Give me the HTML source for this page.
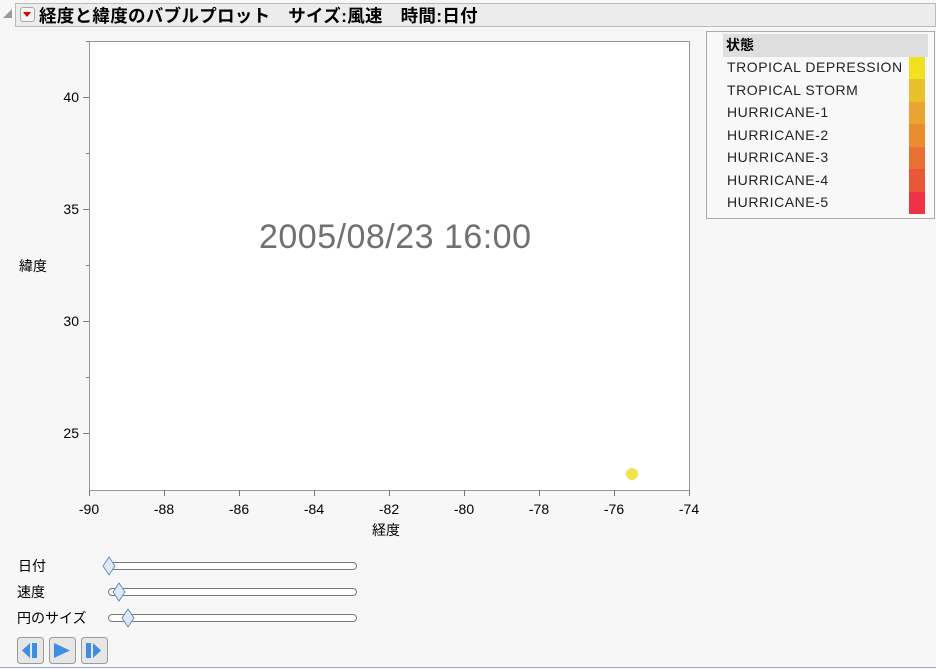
<!DOCTYPE html>
<html><head><meta charset="utf-8"><style>
body{margin:0;width:936px;height:669px;background:#f7f7f7;font-family:"Liberation Sans","Noto Sans CJK JP",sans-serif;position:relative;overflow:hidden}
.a{position:absolute}
.hdr{left:15px;top:3px;width:921px;height:24px;background:#ececec;border:1px solid #bbb;box-sizing:border-box}
.t{font-size:14px;color:#000}
.leg div.r{position:absolute;left:20px;font-size:14px;color:#222;letter-spacing:0.55px}
</style></head><body>
<div class="a" style="left:3px;top:9px;width:0;height:0;border-left:9px solid transparent;border-bottom:9px solid #999"></div>
<div class="a hdr"></div>
<div class="a" style="left:20px;top:7px;width:15px;height:15px;border:1px solid #aaa;border-radius:3px;background:#f4f4f4;box-sizing:border-box"></div>
<div class="a" style="left:23px;top:12px;width:0;height:0;border-left:4.5px solid transparent;border-right:4.5px solid transparent;border-top:5px solid #d00"></div>
<div class="a" style="left:39px;top:3px;font-size:17.5px;font-weight:bold;white-space:pre;letter-spacing:0.3px">経度と緯度のバブルプロット　サイズ:風速　時間:日付</div>

<svg class="a" style="left:0;top:0" width="936" height="669">
<rect x="89.5" y="41.5" width="600" height="449" fill="#fff" stroke="#999"/>
<g stroke="#777">
<line x1="83" y1="97.5" x2="89" y2="97.5"/><line x1="83" y1="209.5" x2="89" y2="209.5"/><line x1="83" y1="321.5" x2="89" y2="321.5"/><line x1="83" y1="433.5" x2="89" y2="433.5"/>
<line x1="86" y1="153.5" x2="89" y2="153.5"/><line x1="86" y1="265.5" x2="89" y2="265.5"/><line x1="86" y1="377.5" x2="89" y2="377.5"/>
<line x1="86" y1="41.5" x2="89" y2="41.5"/>
<line x1="89.5" y1="490" x2="89.5" y2="496"/><line x1="164.5" y1="490" x2="164.5" y2="496"/><line x1="239.5" y1="490" x2="239.5" y2="496"/><line x1="314.5" y1="490" x2="314.5" y2="496"/><line x1="389.5" y1="490" x2="389.5" y2="496"/><line x1="464.5" y1="490" x2="464.5" y2="496"/><line x1="539.5" y1="490" x2="539.5" y2="496"/><line x1="614.5" y1="490" x2="614.5" y2="496"/><line x1="689.5" y1="490" x2="689.5" y2="496"/>
</g>
<g font-family="Liberation Sans,sans-serif" font-size="14" fill="#000">
<text x="79" y="102" text-anchor="end">40</text><text x="79" y="214" text-anchor="end">35</text><text x="79" y="326" text-anchor="end">30</text><text x="79" y="438" text-anchor="end">25</text>
<g text-anchor="middle"><text x="89" y="514">-90</text><text x="164" y="514">-88</text><text x="239" y="514">-86</text><text x="314" y="514">-84</text><text x="389" y="514">-82</text><text x="464" y="514">-80</text><text x="539" y="514">-78</text><text x="614" y="514">-76</text><text x="689" y="514">-74</text></g>
</g>
<text x="395" y="248" text-anchor="middle" font-family="Liberation Sans,sans-serif" font-size="34" fill="#707070" textLength="272">2005/08/23 16:00</text>
<circle cx="632" cy="474" r="6" fill="#f0e448"/>
<g stroke="#777" fill="#fff"><rect x="108.5" y="562.5" width="248" height="7" rx="3.5"/><rect x="108.5" y="588.5" width="248" height="7" rx="3.5"/><rect x="108.5" y="614.5" width="248" height="7" rx="3.5"/></g>
<g stroke="#6a8cb8" fill="#dce9f8"><path d="M109 557 L115 566 L109 575 L103 566Z"/><path d="M119 583 L125 592 L119 601 L113 592Z"/><path d="M128 609 L134 618 L128 627 L122 618Z"/></g>
<g stroke="#999" fill="#e6e6e6"><rect x="17.5" y="637.5" width="26" height="26" rx="3"/><rect x="49.5" y="637.5" width="26" height="26" rx="3"/><rect x="81.5" y="637.5" width="26" height="26" rx="3"/></g>
<g fill="#3d8de0"><path d="M30 643 L22 650.5 L30 658Z"/><rect x="32" y="643" width="5" height="15"/><path d="M54 643 L70 650.5 L54 658Z"/><rect x="86" y="643" width="5" height="15"/><path d="M93 643 L101 650.5 L93 658Z"/></g>
<line x1="0" y1="667.5" x2="936" y2="667.5" stroke="#9aa4cc"/>
</svg>
<div class="a t" style="left:19px;top:256px">緯度</div>
<div class="a t" style="left:372px;top:520px">経度</div>
<div class="a t" style="left:18px;top:556px">日付</div>
<div class="a t" style="left:17px;top:582px">速度</div>
<div class="a t" style="left:17px;top:608px">円のサイズ</div>

<div class="a leg" style="left:706px;top:31px;width:229px;height:188px;border:1px solid #aaa;box-sizing:border-box;background:#f8f8f8">
<div class="a" style="left:16px;top:2px;width:205px;height:23px;background:#dedede;font-weight:bold;font-size:14px;line-height:23px;padding-left:3px;box-sizing:border-box">状態</div>
<div class="r" style="top:27px">TROPICAL DEPRESSION</div>
<div class="r" style="top:50px">TROPICAL STORM</div>
<div class="r" style="top:72px">HURRICANE-1</div>
<div class="r" style="top:95px">HURRICANE-2</div>
<div class="r" style="top:117px">HURRICANE-3</div>
<div class="r" style="top:140px">HURRICANE-4</div>
<div class="r" style="top:162px">HURRICANE-5</div>
<div class="a" style="left:202px;top:25px;width:16px">
<div style="height:22px;background:#f0e220"></div><div style="height:23px;background:#e8c02a"></div><div style="height:22px;background:#e8a530"></div><div style="height:23px;background:#e88e30"></div><div style="height:22px;background:#e87034"></div><div style="height:23px;background:#e85838"></div><div style="height:22px;background:#ee3444"></div>
</div>
</div>
</body></html>
